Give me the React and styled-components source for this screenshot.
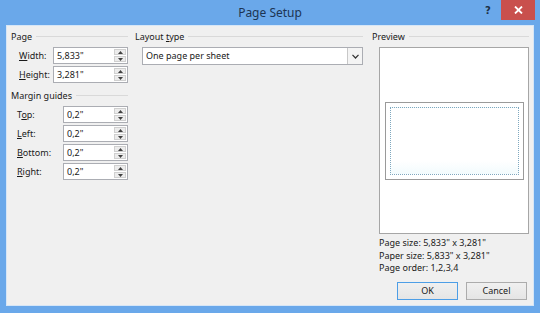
import React from "react";
import styled, { createGlobalStyle } from "styled-components";

const GlobalStyle = createGlobalStyle`
  html, body { margin: 0; padding: 0; }
  body {
    width: 540px; height: 313px; overflow: hidden;
    font-family: "Noto Sans", "Open Sans", sans-serif;
  }
  * { box-sizing: border-box; }
`;

const Window = styled.div`
  width: 540px;
  height: 313px;
  background: #6aa8ea;
  display: flex;
  flex-direction: column;
  padding: 0 7px 8px 7px;
`;

const TitleBar = styled.div`
  height: 26px;
  display: grid;
  grid-template-columns: 1fr auto 1fr;
  align-items: start;
`;

const Title = styled.div`
  grid-column: 2;
  font-size: 12px;
  line-height: 26px;
  color: #1d3553;
`;

const TitleControls = styled.div`
  grid-column: 3;
  justify-self: end;
  display: flex;
  margin-right: -2px;
`;

const HelpButton = styled.div`
  width: 26px;
  height: 20px;
  display: flex;
  align-items: center;
  justify-content: center;
  font-family: "DejaVu Sans", sans-serif;
  font-weight: bold;
  font-size: 10px;
  color: #1c3047;
`;

const CloseButton = styled.div`
  width: 34px;
  height: 20px;
  background: #c9504d;
  display: flex;
  align-items: center;
  justify-content: center;
`;

const Client = styled.div`
  flex: 1;
  background: #f0f0f0;
  box-shadow: 0 0 0 1px #d6e6f7;
  display: flex;
  padding: 3px 4px 0 4px;
  font-size: 9px;
  color: #1a1a1a;
`;

const Column = styled.div`
  width: ${(p) => (p.$w ? `${p.$w}px` : "auto")};
  flex: ${(p) => (p.$w ? "none" : "1")};
  margin-right: ${(p) => p.$mr || 0}px;
  display: flex;
  flex-direction: column;
`;

const GroupHeader = styled.div`
  height: 14px;
  display: flex;
  align-items: center;
  gap: 4px;
  margin-top: ${(p) => p.$mt || 0}px;
  white-space: nowrap;
  &::after {
    content: "";
    flex: 1;
    border-top: 1px solid #d9d9d9;
    margin-top: 1px;
  }
`;

const HeaderText = styled.span``;

const Fields = styled.div`
  display: flex;
  flex-direction: column;
  gap: 2px;
  margin-top: 4px;
`;

const FieldRow = styled.div`
  display: flex;
  align-items: center;
  height: 17px;
  padding-left: ${(p) => p.$indent}px;
`;

const FieldLabel = styled.label`
  flex: 1;
`;

const NumBox = styled.div`
  width: ${(p) => p.$w}px;
  height: 17px;
  background: #fff;
  border: 1px solid #abadb3;
  display: flex;
  align-items: stretch;
`;

const NumText = styled.div`
  flex: 1;
  padding-left: 3px;
  line-height: 15px;
  font-size: 9px;
`;

const Spinner = styled.div`
  width: 14px;
  display: flex;
  flex-direction: column;
  gap: 1px;
  padding: 1px;
`;

const SpinBtn = styled.div`
  flex: 1;
  background: #ececec;
  border: 1px solid #d0d0d0;
  display: flex;
  align-items: center;
  justify-content: center;
`;

const Select = styled.div`
  margin-top: 4px;
  margin-left: 7px;
  height: 18px;
  background: #fff;
  border: 1px solid #abadb3;
  display: flex;
  align-items: stretch;
`;

const SelectText = styled.div`
  flex: 1;
  padding-left: 3px;
  line-height: 16px;
`;

const SelectArrow = styled.div`
  width: 15px;
  border-left: 1px solid #c8c8c8;
  background: #f4f4f4;
  display: flex;
  align-items: center;
  justify-content: center;
`;

const PreviewBox = styled.div`
  margin-top: 4px;
  margin-left: 7px;
  width: 150px;
  height: 187px;
  background: #fff;
  border: 1px solid #a6a6a6;
  display: flex;
  align-items: center;
  justify-content: center;
`;

const PageRect = styled.div`
  width: 139px;
  height: 78px;
  border: 1px solid #9a9a9a;
  background: #fff;
  padding: 4px;
`;

const MarginRect = styled.div`
  width: 100%;
  height: 100%;
  border: 1px dotted #7fa8bf;
  background: linear-gradient(#fff 80%, #f2fbfd);
`;

const Info = styled.div`
  margin-top: 3px;
  margin-left: 7px;
  line-height: 12.5px;
`;

const ButtonRow = styled.div`
  margin-top: 7px;
  display: flex;
  justify-content: flex-end;
  gap: 8px;
  padding-right: 2px;
`;

const Button = styled.div`
  width: 61px;
  height: 18px;
  display: flex;
  align-items: center;
  justify-content: center;
  background: linear-gradient(#f0f0f0, #e5e5e5);
  border: 1px solid ${(p) => (p.$default ? "#4d9ee6" : "#acacac")};
`;

const Up = () => (
  <svg width="5" height="3" viewBox="0 0 5 3"><path d="M0 3 L2.5 0 L5 3 Z" fill="#404040" /></svg>
);
const Down = () => (
  <svg width="5" height="3" viewBox="0 0 5 3"><path d="M0 0 L2.5 3 L5 0 Z" fill="#404040" /></svg>
);

function NumField({ label, value, indent, width }) {
  return (
    <FieldRow $indent={indent}>
      <FieldLabel>{label}</FieldLabel>
      <NumBox $w={width}>
        <NumText>{value}</NumText>
        <Spinner>
          <SpinBtn><Up /></SpinBtn>
          <SpinBtn><Down /></SpinBtn>
        </Spinner>
      </NumBox>
    </FieldRow>
  );
}

export default function App() {
  return (
    <>
      <GlobalStyle />
      <Window>
        <TitleBar>
          <Title>Page Setup</Title>
          <TitleControls>
            <HelpButton>?</HelpButton>
            <CloseButton>
              <svg width="9" height="8" viewBox="0 0 9 8">
                <path d="M1 0.5 L8 7.5 M8 0.5 L1 7.5" stroke="#fff" strokeWidth="1.8" />
              </svg>
            </CloseButton>
          </TitleControls>
        </TitleBar>
        <Client>
          <Column $w={117} $mr={7}>
            <GroupHeader><HeaderText>Page</HeaderText></GroupHeader>
            <Fields>
              <NumField indent={8} width={75} label={<><u>W</u>idth:</>} value={'5,833"'} />
              <NumField indent={8} width={75} label={<><u>H</u>eight:</>} value={'3,281"'} />
            </Fields>
            <GroupHeader $mt={5}><HeaderText>Margin guides</HeaderText></GroupHeader>
            <Fields>
              <NumField indent={6} width={65} label={<>T<u>o</u>p:</>} value={'0,2"'} />
              <NumField indent={6} width={65} label={<><u>L</u>eft:</>} value={'0,2"'} />
              <NumField indent={6} width={65} label={<><u>B</u>ottom:</>} value={'0,2"'} />
              <NumField indent={6} width={65} label={<><u>R</u>ight:</>} value={'0,2"'} />
            </Fields>
          </Column>
          <Column $w={228} $mr={9}>
            <GroupHeader><HeaderText>Layout <u>t</u>ype</HeaderText></GroupHeader>
            <Select>
              <SelectText>One page per sheet</SelectText>
              <SelectArrow>
                <svg width="7" height="5" viewBox="0 0 7 5">
                  <path d="M0.5 0.8 L3.5 4 L6.5 0.8" fill="none" stroke="#333" strokeWidth="1.2" />
                </svg>
              </SelectArrow>
            </Select>
          </Column>
          <Column>
            <GroupHeader><HeaderText>Preview</HeaderText></GroupHeader>
            <PreviewBox>
              <PageRect>
                <MarginRect />
              </PageRect>
            </PreviewBox>
            <Info>
              <div>Page size: 5,833" x 3,281"</div>
              <div>Paper size: 5,833" x 3,281"</div>
              <div>Page order: 1,2,3,4</div>
            </Info>
            <ButtonRow>
              <Button $default>OK</Button>
              <Button>Cancel</Button>
            </ButtonRow>
          </Column>
        </Client>
      </Window>
    </>
  );
}
